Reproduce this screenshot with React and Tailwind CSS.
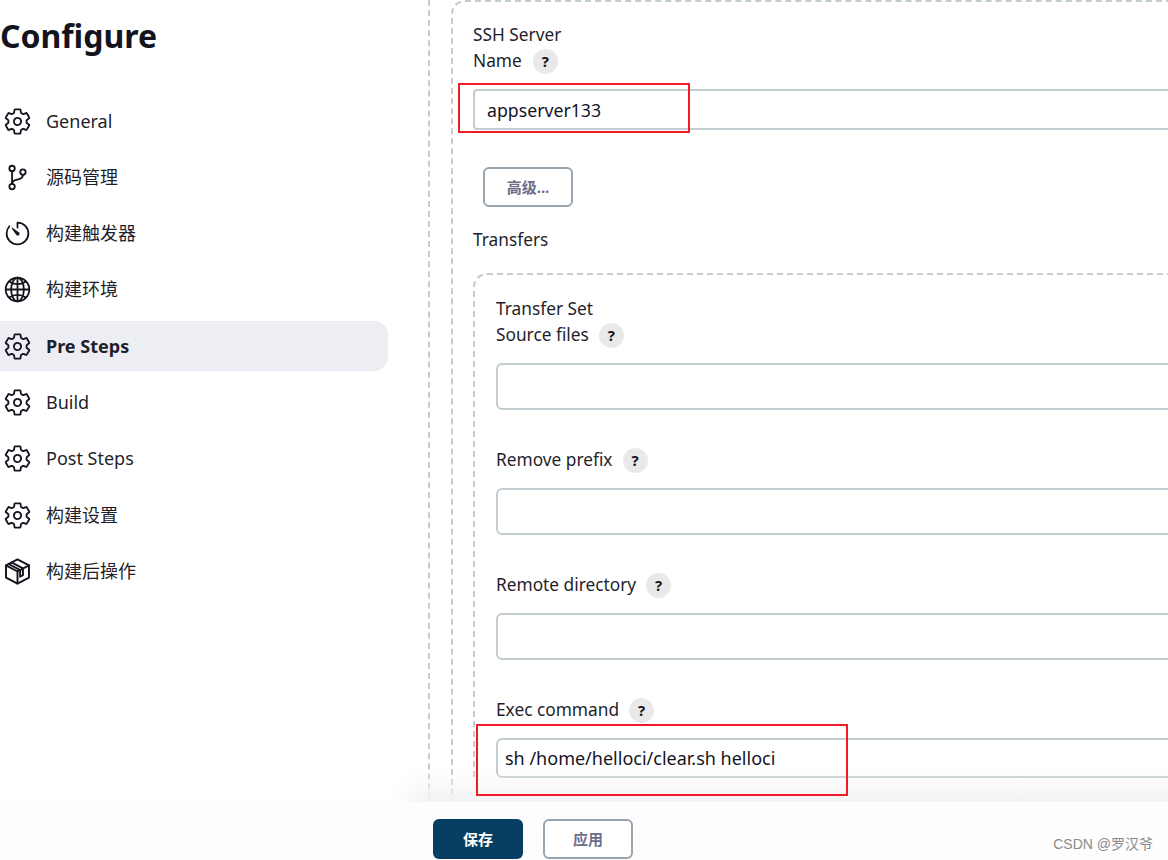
import React from "react";
import { IoSettingsOutline, IoGitBranchOutline, IoTimerOutline, IoGlobeOutline } from "react-icons/io5";

const FONT = "font-['Noto_Sans','Noto_Sans_CJK_SC',sans-serif]";

const PackageIcon = ({ className }) => (
  <svg viewBox="0 0 24 24" fill="none" stroke="currentColor" strokeWidth="1.600" strokeLinejoin="round" strokeLinecap="round" className={className}>
    <path d="M12 2 21.500 7v10L12 22 2.500 17V7z" />
    <path d="M2.500 7 12 12l9.500-5M12 12v10" />
    <path d="M7 4.500 16.500 9.500v5.500l-2.300 1.300V10.800L5 6" />
  </svg>
);

const navItems = [
  { label: "General", icon: IoSettingsOutline },
  { label: "源码管理", icon: IoGitBranchOutline },
  { label: "构建触发器", icon: IoTimerOutline },
  { label: "构建环境", icon: IoGlobeOutline },
  { label: "Pre Steps", icon: IoSettingsOutline, active: true },
  { label: "Build", icon: IoSettingsOutline },
  { label: "Post Steps", icon: IoSettingsOutline },
  { label: "构建设置", icon: IoSettingsOutline },
  { label: "构建后操作", icon: PackageIcon },
];

const Help = () => (
  <span className="flex h-[25px] w-[25px] items-center justify-center rounded-full bg-[#e9e9ea] text-[15px] font-bold text-[#14141f]">?</span>
);

const Field = ({ label, value, height = "h-[47px]" }) => (
  <div>
    <div className="flex h-[26px] items-center gap-[10px] text-[#1f1f2b]">
      <span>{label}</span>
      <Help />
    </div>
    <div className={`mt-[15px] flex items-center rounded-[6px] border-2 border-[#c3ccd1] bg-white pl-[7px] text-[18px] text-[#14141f] ${height}`}>{value}</div>
  </div>
);

const NavItem = ({ item }) => {
  const Icon = item.icon;
  return (
    <div className={`flex h-[50px] items-center gap-[14px] rounded-r-[14px] pl-[3px] ${item.active ? "bg-[#edeef3] font-bold" : ""}`}>
      <Icon className="h-[29px] w-[29px] shrink-0 text-[#14141f]" />
      <span>{item.label}</span>
    </div>
  );
};

export default function App() {
  return (
    <div className={`relative flex h-[860px] w-[1168px] overflow-hidden bg-white text-[17.300px] text-[#1f1f2b] ${FONT}`}>
      <aside className="w-[388px] shrink-0 text-[18px]">
        <h1 className="mt-[14px] text-[32px] leading-[44px] font-bold text-[#14141f]">Configure</h1>
        <nav className="mt-[38px] flex flex-col gap-[6.300px]">
          {navItems.map((item) => (
            <NavItem key={item.label} item={item} />
          ))}
        </nav>
      </aside>

      <main className="ml-[40px] flex-1">
        <div className="-mt-[20px] h-[900px] border-l-2 border-dashed border-[#c3ccd1] pl-[21px]">
          <div className="-mr-[20px] mt-[20px] h-[900px] rounded-tl-[14px] border-t-2 border-l-2 border-dashed border-[#c3ccd1] pt-[20px] pl-[20px]">
            <div className="leading-[26px]">SSH Server</div>
            <div className="flex h-[26px] items-center gap-[11px]">
              <span>Name</span>
              <Help />
            </div>
            <div className="mt-[15px] flex h-[41px] items-center rounded-[4px] border-2 border-[#c3ccd1] pt-[2px] pl-[12px] text-[17.700px] text-[#14141f]">appserver133</div>
            <button className="mt-[37px] ml-[10px] flex h-[40px] w-[90px] items-center justify-center rounded-[6px] border-2 border-[#98a4af] text-[15px] font-bold text-[#6e6e8a]">高级...</button>
            <div className="mt-[20px] leading-[26px]">Transfers</div>
            <div className="mt-[20px] rounded-tl-[14px] border-t-2 border-l-2 border-dashed border-[#c3ccd1] pt-[21px] pl-[21px]">
              <div className="leading-[26px]">Transfer Set</div>
              <div className="flex flex-col gap-[37px]">
                <Field label="Source files" />
                <Field label="Remove prefix" />
                <Field label="Remote directory" />
                <Field label="Exec command" value="sh /home/helloci/clear.sh helloci" height="h-[40px]" />
              </div>
            </div>
          </div>
        </div>
      </main>

      {/* sticky save bar */}
      <div className="absolute right-0 bottom-0 left-0">
        <div className="relative ml-[392px] h-[32px] bg-gradient-to-b from-transparent to-[#f3f3f3]">
          <div className="absolute top-0 bottom-0 left-0 w-[36px] bg-gradient-to-r from-white to-transparent" />
        </div>
        <div className="flex h-[58px] items-start gap-[20px] bg-[#fdfdfe] pt-[17px] pl-[433px]">
          <button className="flex h-[40px] w-[90px] items-center justify-center rounded-[6px] bg-[#073f62] text-[15px] font-bold text-white">保存</button>
          <button className="flex h-[40px] w-[90px] items-center justify-center rounded-[6px] border-2 border-[#98a4af] bg-white text-[15px] font-bold text-[#6e6e8a]">应用</button>
        </div>
        <span className="absolute right-[15px] bottom-[5px] font-['Liberation_Sans','Noto_Sans_CJK_SC',sans-serif] text-[14px] text-[#8a8a8a]">CSDN @罗汉爷</span>
      </div>

      {/* red annotation boxes */}
      <div className="absolute top-[83px] left-[458px] h-[50px] w-[232px] border-2 border-[#ee1c25]" />
      <div className="absolute top-[724px] left-[476px] h-[72px] w-[372px] border-2 border-[#ee1c25]" />
    </div>
  );
}
